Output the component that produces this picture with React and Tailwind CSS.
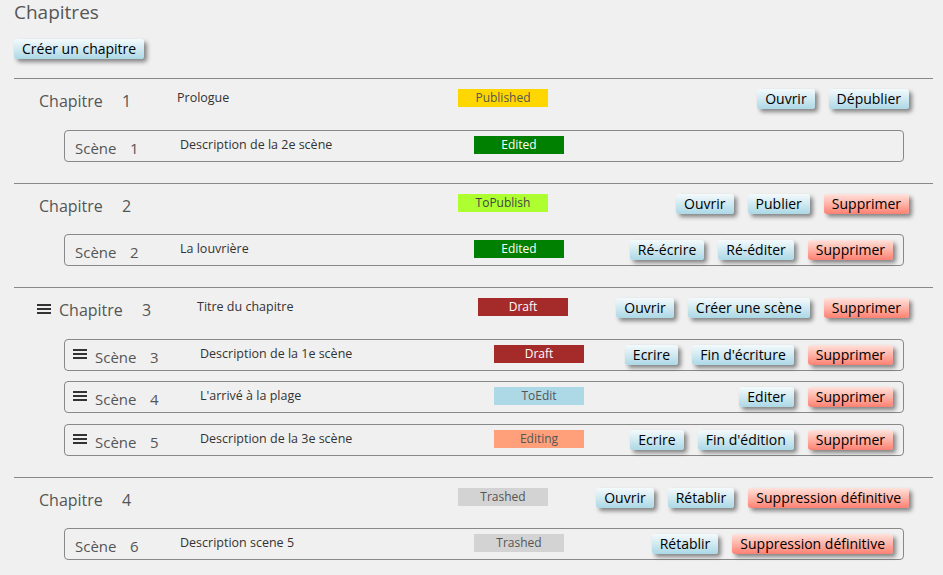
const chapters = [
    {
        num: 1, title: 'Prologue', status: 'Published', drag: false,
        actions: [['Ouvrir', 'blue'], ['Dépublier', 'blue']],
        scenes: [
            { num: 1, desc: 'Description de la 2e scène', status: 'Edited', drag: false, actions: [] }
        ]
    },
    {
        num: 2, title: '', status: 'ToPublish', drag: false,
        actions: [['Ouvrir', 'blue'], ['Publier', 'blue'], ['Supprimer', 'red']],
        scenes: [
            { num: 2, desc: 'La louvrière', status: 'Edited', drag: false, actions: [['Ré-écrire', 'blue'], ['Ré-éditer', 'blue'], ['Supprimer', 'red']] }
        ]
    },
    {
        num: 3, title: 'Titre du chapitre', status: 'Draft', drag: true,
        actions: [['Ouvrir', 'blue'], ['Créer une scène', 'blue'], ['Supprimer', 'red']],
        scenes: [
            { num: 3, desc: 'Description de la 1e scène', status: 'Draft', drag: true, actions: [['Ecrire', 'blue'], ["Fin d'écriture", 'blue'], ['Supprimer', 'red']] },
            { num: 4, desc: "L'arrivé à la plage", status: 'ToEdit', drag: true, actions: [['Editer', 'blue'], ['Supprimer', 'red']] },
            { num: 5, desc: 'Description de la 3e scène', status: 'Editing', drag: true, actions: [['Ecrire', 'blue'], ["Fin d'édition", 'blue'], ['Supprimer', 'red']] }
        ]
    },
    {
        num: 4, title: '', status: 'Trashed', drag: false,
        actions: [['Ouvrir', 'blue'], ['Rétablir', 'blue'], ['Suppression définitive', 'red']],
        scenes: [
            { num: 6, desc: 'Description scene 5', status: 'Trashed', drag: false, actions: [['Rétablir', 'blue'], ['Suppression définitive', 'red']] }
        ]
    }
];

const statusStyles = {
    Published: 'bg-[#ffd700] text-[#555]',
    ToPublish: 'bg-[#adff2f] text-[#444]',
    Edited: 'bg-[#008000] text-white',
    Draft: 'bg-[#a52a2a] text-white',
    ToEdit: 'bg-[#add8e6] text-[#555]',
    Editing: 'bg-[#ffa07a] text-[#555]',
    Trashed: 'bg-[#d3d3d3] text-[#555]'
};

const Badge = ({ status }) => (
    <div className={`w-[90px] h-[18px] shrink-0 text-center text-[12px] leading-[18px] ${statusStyles[status]}`}>
        {status}
    </div>
);

const Button = ({ label, color }) => (
    <button
        className={`h-[20px] px-[8px] rounded-[3px] text-[14px] leading-[20px] text-black whitespace-nowrap shadow-[3px_3px_4px_rgba(0,0,0,0.45)] bg-linear-to-b ${color === 'red' ? 'from-[#ffe2dc] to-[#fa8072]' : 'from-[#f4fafc] to-[#acd8e6]'}`}
    >
        {label}
    </button>
);

const Handle = ({ top }) => (
    <div className={`w-[22px] -ml-[2px] shrink-0 ${top}`}>
        <svg width="14" height="10" viewBox="0 0 14 10">
            <rect x="0" y="0" width="14" height="2" fill="#333" />
            <rect x="0" y="4" width="14" height="2" fill="#333" />
            <rect x="0" y="8" width="14" height="2" fill="#333" />
        </svg>
    </div>
);

const SceneRow = ({ scene }) => (
    <div className="ml-[50px] mr-[29px] h-[32px] border border-[#888] rounded-[4px] pl-[10px] pr-[10px] pt-[5px] flex items-start">
        {scene.drag && <Handle top="mt-[4px]" />}
        <div className="w-[105px] shrink-0 flex text-[15px] leading-[24px] text-[#555]">
            <span className="w-[55px]">Scène</span>
            <span>{scene.num}</span>
        </div>
        <div className="w-[294px] shrink-0 text-[12.5px] leading-[18px] text-[#333]">{scene.desc}</div>
        <Badge status={scene.status} />
        <div className="ml-auto flex gap-[14px]">
            {scene.actions.map(([label, color]) => (
                <Button key={label} label={label} color={color} />
            ))}
        </div>
    </div>
);

const ChapterBlock = ({ chapter }) => (
    <div className="border-t border-[#888] pt-[10px] pb-[21px]">
        <div className="h-[24px] pl-[25px] pr-[24px] flex items-start">
            {chapter.drag && <Handle top="mt-[6px]" />}
            <div className="w-[138px] shrink-0 flex text-[16px] leading-[24px] text-[#555]">
                <span className="w-[83px]">Chapitre</span>
                <span>{chapter.num}</span>
            </div>
            <div className="w-[281px] shrink-0 text-[12.5px] leading-[18px] text-[#333]">{chapter.title}</div>
            <Badge status={chapter.status} />
            <div className="ml-auto flex gap-[14px]">
                {chapter.actions.map(([label, color]) => (
                    <Button key={label} label={label} color={color} />
                ))}
            </div>
        </div>
        <div className="mt-[16.5px] flex flex-col gap-[10.5px]">
            {chapter.scenes.map((scene) => (
                <SceneRow key={scene.num} scene={scene} />
            ))}
        </div>
    </div>
);

const App = () => {
    return (
        <div className="min-h-[575px] bg-[#f0f0f0] pl-[14px] pr-[10px] font-['Open_Sans',sans-serif] overflow-hidden">
            <h1 className="text-[19px] leading-[24px] text-[#555]">Chapitres</h1>
            <div className="mt-[15px] mb-[19px] flex">
                <Button label="Créer un chapitre" color="blue" />
            </div>
            {chapters.map((chapter) => (
                <ChapterBlock key={chapter.num} chapter={chapter} />
            ))}
        </div>
    );
};

export default App;
